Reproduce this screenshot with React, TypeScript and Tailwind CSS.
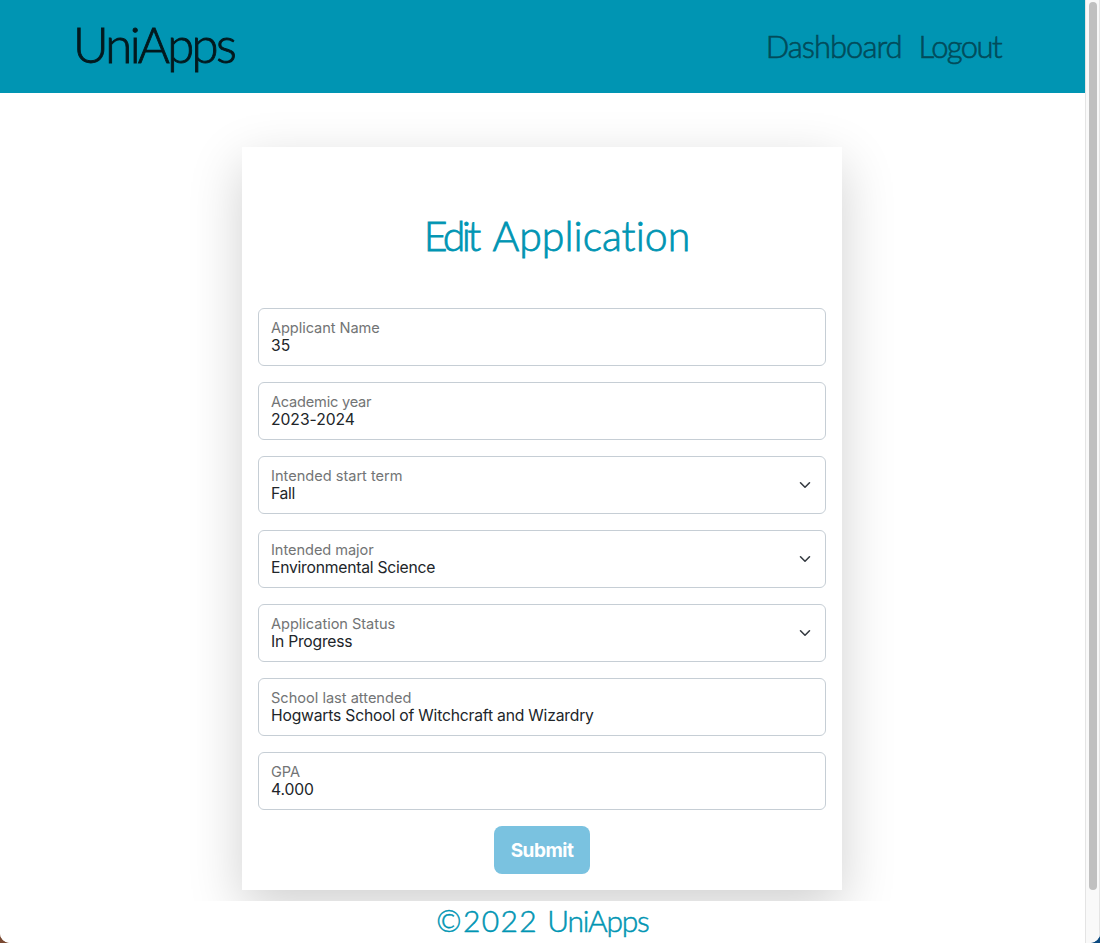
import React from "react";

type Field = {
  label: string;
  value: string;
  select?: boolean;
  labelSpacing: string;
  valueSpacing: string;
};

const fields: Field[] = [
  { label: "Applicant Name", value: "35", labelSpacing: "tracking-[-0.07px]", valueSpacing: "tracking-[0.1px]" },
  { label: "Academic year", value: "2023-2024", labelSpacing: "tracking-[-0.22px]", valueSpacing: "tracking-[-0.05px]" },
  { label: "Intended start term", value: "Fall", select: true, labelSpacing: "tracking-[-0.01px]", valueSpacing: "tracking-[-0.3px]" },
  { label: "Intended major", value: "Environmental Science", select: true, labelSpacing: "tracking-[-0.06px]", valueSpacing: "tracking-[-0.24px]" },
  { label: "Application Status", value: "In Progress", select: true, labelSpacing: "tracking-[-0.04px]", valueSpacing: "tracking-[-0.24px]" },
  { label: "School last attended", value: "Hogwarts School of Witchcraft and Wizardry", labelSpacing: "tracking-[-0.01px]", valueSpacing: "tracking-[-0.2px]" },
  { label: "GPA", value: "4.000", labelSpacing: "tracking-[-0.1px]", valueSpacing: "tracking-[-0.1px]" },
];

function Chevron() {
  return (
    <svg className="size-3 shrink-0" viewBox="0 0 16 16" fill="none">
      <path d="m2 5 6 6 6-6" stroke="#343a40" strokeWidth="2.1" strokeLinecap="round" strokeLinejoin="round" />
    </svg>
  );
}

function FormField({ field }: { field: Field }) {
  return (
    <div className="flex h-[58px] items-center justify-between rounded-md border border-[#c6ced5] bg-white pl-3 pr-[14px]">
      <div className="flex flex-col whitespace-nowrap">
        <span className={`text-[14.6px] leading-[18px] text-[#727475] ${field.labelSpacing}`}>{field.label}</span>
        <span className={`text-[15.7px] leading-[18px] text-[#212529] ${field.valueSpacing}`}>{field.value}</span>
      </div>
      {field.select && <Chevron />}
    </div>
  );
}

export default function App() {
  return (
    <div className="h-[943px] w-[1100px] bg-linear-to-r from-[#7a4a32] to-[#0b4a80]">
      <div className="flex h-full w-full overflow-hidden rounded-b-[10px] bg-white font-['Inter',sans-serif]">
        <div className="flex w-[1085px] flex-col">
          <header className="flex h-[93px] shrink-0 items-center justify-between bg-[#0095b3] pl-[73px] pr-[84px] pb-[2px] font-['Lato',sans-serif] font-light whitespace-nowrap">
            <span className="pb-[3px] text-[49px] leading-none tracking-[-2.6px] text-[#03191e] [-webkit-text-stroke:0.9px_#03191e]">UniApps</span>
            <nav className="flex gap-[17px] pt-[2px] text-[31px] leading-none text-[#024b5a] [-webkit-text-stroke:0.6px_#024b5a]">
              <span className="tracking-[-1px]">Dashboard</span>
              <span className="tracking-[-1.6px]">Logout</span>
            </nav>
          </header>
          <main className="flex h-[808px] shrink-0 justify-center overflow-hidden pt-[54px] pr-px">
            <form className="flex h-[743px] w-[600px] flex-col bg-white px-4 shadow-[0_17px_50px_0_rgba(0,0,0,0.19)]">
              <h1 className="flex h-[161px] items-center justify-center gap-[15px] pl-[30px] pt-[16px] font-['Lato',sans-serif] text-[41px] font-light whitespace-nowrap text-[#0095b3] [font-variant-ligatures:none] [-webkit-text-stroke:0.8px_#0095b3]">
                <span className="tracking-[-3.7px]">Edit</span>{" "}
                <span className="tracking-[0px]">Application</span>
              </h1>
              <div className="flex flex-col gap-4">
                {fields.map((f) => (
                  <FormField key={f.label} field={f} />
                ))}
              </div>
              <button type="button" className="mt-4 h-12 w-24 self-center rounded-lg bg-[#7ac2e0] pt-[3px] text-[19px] font-bold tracking-[-0.5px] text-white">
                Submit
              </button>
            </form>
          </main>
          <footer className="flex h-[42px] items-center justify-center gap-[9px] bg-white pb-[4px] font-['Lato',sans-serif] text-[30px] font-light leading-none whitespace-nowrap text-[#0095b3] [-webkit-text-stroke:0.5px_#0095b3]">
            <span className="tracking-[1.4px]">©2022</span>{" "}
            <span className="tracking-[-1.2px]">UniApps</span>
          </footer>
        </div>
        <div className="h-full w-[15px] border-x border-[#e4e4e4] bg-[#f9f9f9] pl-[3px] pt-0.5">
          <div className="h-[888px] w-2 rounded-full bg-[#c0c0c0]" />
        </div>
      </div>
    </div>
  );
}
